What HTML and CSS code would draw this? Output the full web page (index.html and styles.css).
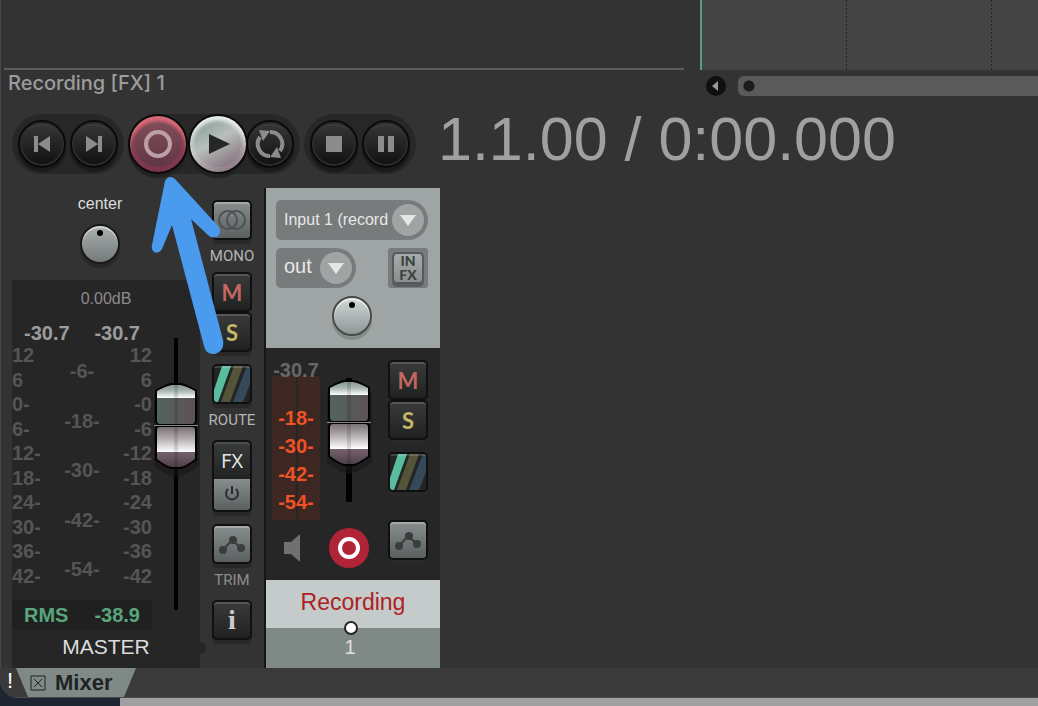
FILE: index.html
```html
<!doctype html>
<html lang="en">
  <head>
    <meta charset="UTF-8" />
    <meta name="viewport" content="width=device-width, initial-scale=1.0" />
    <title>Mixer</title>
    <link rel="stylesheet" href="styles.css">
  </head>
  <body>
    <svg class="defs" aria-hidden="true">
      <defs>
        <linearGradient id="cap-top" x1="0" y1="0" x2="0" y2="1">
          <stop offset="0" stop-color="#82938e" />
          <stop offset="0.5" stop-color="#a9b7b3" />
          <stop offset="1" stop-color="#ffffff" />
        </linearGradient>
        <linearGradient id="cap-upper" x1="0" y1="0" x2="1" y2="0">
          <stop offset="0" stop-color="#52645e" />
          <stop offset="1" stop-color="#5d5258" />
        </linearGradient>
        <linearGradient id="cap-lower" x1="0" y1="0" x2="0" y2="1">
          <stop offset="0" stop-color="#736c70" />
          <stop offset="0.5" stop-color="#b5aeb2" />
          <stop offset="1" stop-color="#ffffff" />
        </linearGradient>
        <linearGradient id="cap-bottom" x1="0" y1="0" x2="0" y2="1">
          <stop offset="0" stop-color="#75616d" />
          <stop offset="1" stop-color="#4b3d45" />
        </linearGradient>
        <clipPath id="cap-clip">
          <path d="M5 9Q14 4 20 3H28Q34 4 43 9V38Q43 42 40 42H8Q5 42 5 38ZM5 48Q5 45 8 45H40Q43 45 43 48V77Q34 84 28 85H20Q14 84 5 77Z" />
        </clipPath>
      </defs>
      <symbol id="cap" viewBox="0 0 48 96">
        <path d="M2 14V84Q14 93 24 95Q34 93 47 84V14Z" fill="#181818" opacity="0.6" />
        <path d="M3 8Q14 2 19 1H29Q34 2 45 8V40L42 43L45 46V78Q35 85 29 87H19Q13 85 3 78V46L6 43L3 40Z" />
        <g clip-path="url(#cap-clip)">
          <rect x="5" y="2" width="38" height="14" fill="url(#cap-top)" />
          <rect x="5" y="16" width="38" height="27" fill="url(#cap-upper)" />
          <rect x="5" y="44" width="38" height="26" fill="url(#cap-lower)" />
          <rect x="5" y="70" width="38" height="17" fill="url(#cap-bottom)" />
          <rect x="22" y="3" width="4" height="84" opacity="0.12" />
        </g>
        <path d="M2 43.5H46" stroke="#8a8a8a" />
      </symbol>
      <symbol id="route" viewBox="0 0 36 36">
        <rect width="36" height="36" fill="#232525" />
        <path d="M8 0H17L4 36H0V24Z" fill="#58bd9e" />
        <path d="M20 0H29L16 36H7Z" fill="#54543a" />
        <path d="M33 0H36V18L29 36H19Z" fill="#34495a" />
        <path d="M0 1H36" stroke="#fff" stroke-width="2" opacity="0.15" />
      </symbol>
      <symbol id="envelope" viewBox="0 0 36 36">
        <path d="M9 24L18 14L27 22" fill="none" stroke="#3a3d3d" stroke-width="2" />
        <g fill="#3a3d3d">
          <circle cx="9" cy="24" r="4" />
          <circle cx="19" cy="14" r="4" />
          <circle cx="27" cy="22" r="4" />
        </g>
      </symbol>
      <symbol id="drop" viewBox="0 0 32 32">
        <circle cx="16" cy="16" r="16" fill="#9fa5a5" />
        <path d="M8 11H24L16 22Z" fill="#e4e6e6" />
      </symbol>
    </svg>

    <div class="window">
      <div class="arrange">
        <div class="track-list"></div>
        <div class="timeline">
          <span class="grid-line"></span>
          <span class="grid-line"></span>
        </div>
      </div>

      <div class="info-bar">
        <div class="track-info">Recording [FX] 1</div>
        <div class="scroll">
          <button type="button" class="scroll-left" aria-label="Scroll left">
            <svg width="20" height="20" viewBox="0 0 20 20"><path d="M6 10L12 5V15Z" fill="#999" /></svg>
          </button>
          <div class="scroll-bar"></div>
        </div>
      </div>

      <div class="transport">
        <div class="pill">
          <button type="button" class="round" aria-label="Go to start">
            <svg width="24" height="24" viewBox="0 0 24 24"><path d="M4 4H8V20H4ZM8 12L20 4V20Z" /></svg>
          </button>
          <button type="button" class="round" aria-label="Go to end">
            <svg width="24" height="24" viewBox="0 0 24 24"><path d="M16 4H20V20H16ZM16 12L4 4V20Z" /></svg>
          </button>
        </div>
        <div class="pill pill-main">
          <button type="button" class="round big record" aria-label="Record">
            <svg width="32" height="32" viewBox="0 0 32 32"><circle cx="16" cy="16" r="12" fill="none" stroke="#bba0a5" stroke-width="4" /></svg>
          </button>
          <button type="button" class="round big play" aria-label="Play">
            <svg width="32" height="32" viewBox="0 0 32 32"><path d="M7 6L28 16L7 26Z" fill="#252827" /></svg>
          </button>
          <button type="button" class="round repeat" aria-label="Repeat">
            <svg width="32" height="32" viewBox="0 0 32 32">
              <g fill="none" stroke="#8c8c8c" stroke-width="4">
                <path d="M16 4A12 12 0 0 1 26 23" />
                <path d="M16 28A12 12 0 0 1 6 9" />
              </g>
              <path d="M5 2L16 3L9 13Z" />
              <path d="M27 30L16 29L23 19Z" />
            </svg>
          </button>
        </div>
        <div class="pill">
          <button type="button" class="round" aria-label="Stop">
            <svg width="24" height="24" viewBox="0 0 24 24"><path d="M4 4H20V20H4Z" /></svg>
          </button>
          <button type="button" class="round" aria-label="Pause">
            <svg width="24" height="24" viewBox="0 0 24 24"><path d="M4 4H10V20H4ZM14 4H20V20H14Z" /></svg>
          </button>
        </div>
        <div class="time">1.1.00 / 0:00.000</div>
      </div>

      <div class="mixer">
        <div class="master">
          <div class="pan">
            <label for="master-pan">center</label>
            <input id="master-pan" class="knob" type="range" />
          </div>
          <div class="master-panel">
            <div class="volume">0.00dB</div>
            <div class="meters">
              <div class="meter-area">
                <div class="peaks"><span>-30.7</span><span>-30.7</span></div>
                <div class="scales">
                  <div class="scale">
                    <span>12</span><span>6</span><span>0-</span><span>6-</span><span>12-</span><span>18-</span><span>24-</span><span>30-</span><span>36-</span><span>42-</span>
                  </div>
                  <div class="scale scale-mid">
                    <span>-6-</span><span>-18-</span><span>-30-</span><span>-42-</span><span>-54-</span>
                  </div>
                  <div class="scale scale-right">
                    <span>12</span><span>6</span><span>-0</span><span>-6</span><span>-12</span><span>-18</span><span>-24</span><span>-30</span><span>-36</span><span>-42</span>
                  </div>
                </div>
                <div class="rms"><span>RMS</span><span>-38.9</span></div>
              </div>
              <div class="fader">
                <svg width="48" height="272" viewBox="0 0 48 272">
                  <rect x="22" width="4" height="272" />
                  <use href="#cap" y="44" width="48" height="96" />
                </svg>
                <input type="range" aria-label="Master volume" />
              </div>
            </div>
            <div class="master-name">MASTER</div>
          </div>
        </div>

        <div class="master-buttons">
          <button type="button" class="key gray" aria-label="Mono">
            <svg width="36" height="36" viewBox="0 0 36 36">
              <g fill="none" stroke="#4c5050" stroke-width="2">
                <circle cx="14" cy="18" r="9" />
                <circle cx="22" cy="18" r="9" />
              </g>
            </svg>
          </button>
          <div class="caption">MONO</div>
          <button type="button" class="key mute">M</button>
          <button type="button" class="key solo">S</button>
          <button type="button" class="key route" aria-label="Route"><svg width="36" height="36"><use href="#route" /></svg></button>
          <div class="caption">ROUTE</div>
          <button type="button" class="key fx">FX</button>
          <button type="button" class="key gray power" aria-label="Bypass FX">
            <svg width="20" height="20" viewBox="0 0 20 20">
              <path d="M10 1V9M6 4A6 6 0 1 0 14 4" fill="none" stroke="#2b2e2e" stroke-width="2" />
            </svg>
          </button>
          <button type="button" class="key gray env" aria-label="Envelopes"><svg width="36" height="36"><use href="#envelope" /></svg></button>
          <div class="caption dim">TRIM</div>
          <button type="button" class="key info">i</button>
        </div>

        <div class="track">
          <div class="track-input">
            <div class="select wide">
              <select aria-label="Record input"><option>Input 1 (record)</option></select>
              <svg width="32" height="32"><use href="#drop" /></svg>
            </div>
            <div class="input-row">
              <div class="select">
                <select class="large" aria-label="Output"><option>out</option></select>
                <svg width="32" height="32"><use href="#drop" /></svg>
              </div>
              <div class="in-fx"><button type="button"><span>IN</span><span>FX</span></button></div>
            </div>
            <input class="knob light" type="range" aria-label="Track pan" />
          </div>
          <div class="track-body">
            <div class="track-main">
              <div class="track-meter">
                <span class="peak">-30.7</span>
                <div class="track-scale">
                  <span>-18-</span><span>-30-</span><span>-42-</span><span>-54-</span>
                </div>
              </div>
              <div class="fader">
                <svg width="48" height="142" viewBox="0 0 48 142">
                  <rect x="21" width="6" height="124" />
                  <use href="#cap" y="1" width="48" height="96" />
                </svg>
                <input type="range" aria-label="Track volume" />
              </div>
              <button type="button" class="monitor" aria-label="Monitor">
                <svg width="48" height="40" viewBox="0 0 48 40"><path d="M12 14H19L28 6V34L19 26H12Z" fill="#707070" /></svg>
              </button>
              <button type="button" class="arm" aria-label="Record arm">
                <svg width="40" height="40" viewBox="0 0 40 40">
                  <circle cx="20" cy="20" r="20" fill="#b02436" />
                  <circle cx="20" cy="20" r="9" fill="none" stroke="#fff" stroke-width="4" />
                </svg>
              </button>
            </div>
            <div class="track-buttons">
              <button type="button" class="key mute">M</button>
              <button type="button" class="key solo">S</button>
              <button type="button" class="key route" aria-label="Route"><svg width="36" height="36"><use href="#route" /></svg></button>
              <button type="button" class="key gray env" aria-label="Envelopes"><svg width="36" height="36"><use href="#envelope" /></svg></button>
            </div>
          </div>
          <div class="track-name">Recording</div>
          <div class="track-number">1</div>
        </div>

        <svg class="pointer" width="76" height="182" viewBox="150 175 76 182" aria-hidden="true">
          <path d="M165 181Q169 174 175 179L218 226Q222 232 218 236Q214 239 209 236L191 219L223 340Q225 351 215 354Q206 355 204 346L172 225L162 249Q159 254 154 252Q151 250 152 245Z" fill="#4a9aee" />
        </svg>
      </div>

      <div class="docker">
        <span class="alert">!</span>
        <button type="button" class="tab">
          <svg width="16" height="16" viewBox="0 0 16 16">
            <path d="M1 1H15V15H1ZM4 4L12 12M12 4L4 12" fill="none" stroke="#1f2323" />
          </svg>
          Mixer
        </button>
      </div>
    </div>
  </body>
</html>
```
FILE: styles.css
```css
* {
  box-sizing: border-box;
}
body {
  margin: 0;
  min-height: 100vh;
  padding-bottom: 8px;
  overflow: hidden;
  font-family: "Liberation Sans", Arial, sans-serif;
  color: #9c9c9c;
  background: linear-gradient(to right, #1d2533 120px, #a0a0a0 120px);
}
button {
  padding: 0;
  border: none;
  background: none;
  color: inherit;
  font-family: inherit;
}
svg {
  display: block;
}
.defs {
  position: absolute;
  width: 0;
  height: 0;
}
.window {
  display: flex;
  flex-direction: column;
  min-height: calc(100vh - 8px);
  background: #333333;
  border-bottom-left-radius: 18px;
  box-shadow: inset 1px 0 #484848;
  overflow: hidden;
}

/* arrange view */
.arrange {
  display: flex;
  gap: 16px;
  height: 70px;
  padding-left: 4px;
}
.track-list {
  width: 680px;
  border-bottom: 2px solid #5b5b5b;
}
.timeline {
  display: flex;
  flex: 1;
  border-left: 2px solid #559a86;
  background: #444444;
}
.grid-line {
  width: 1px;
  margin-left: 144px;
  background: repeating-linear-gradient(#262626 0 2px, #444444 2px 4px);
}
.info-bar {
  display: flex;
  height: 44px;
}
.track-info {
  width: 706px;
  padding-left: 8px;
  font-family: Inter, sans-serif;
  font-size: 20px;
  font-weight: 500;
  line-height: 26px;
}
.scroll {
  display: flex;
  flex: 1;
  gap: 12px;
  height: 20px;
  margin-top: 6px;
}
.scroll-left {
  width: 20px;
  height: 20px;
  border-radius: 50%;
  background: #101010;
}
.scroll-bar {
  flex: 1;
  border-radius: 6px 0 0 6px;
  background: radial-gradient(circle at 11px 10px, #1c1c1c 5px, #5a5a5a 6px);
}

/* transport */
.transport {
  display: flex;
  align-items: center;
  gap: 4px;
  height: 60px;
  margin-bottom: 14px;
  padding-left: 12px;
}
.pill {
  display: flex;
  align-items: center;
  gap: 4px;
  height: 60px;
  padding: 0 6px;
  border-radius: 30px;
  background: #272727;
}
.pill-main {
  gap: 0;
  padding-left: 0;
}
.round {
  display: flex;
  align-items: center;
  justify-content: center;
  width: 48px;
  height: 48px;
  border: 2px solid #0a0a0a;
  border-radius: 50%;
  background: linear-gradient(#383838, #101010);
  box-shadow: inset 0 0 0 2px #2d2d2d, inset 0 3px 1px #444444, 0 4px 1px #1a1a1a;
  fill: #8c8c8c;
}
.big {
  z-index: 1;
  width: 60px;
  height: 60px;
}
.record {
  background: linear-gradient(#84505a, #5d3344);
  box-shadow: inset 0 0 0 5px rgba(190, 60, 90, 0.3), inset 0 5px 3px #e27c80, 0 4px 1px #222222;
}
.play {
  background: linear-gradient(150deg, #93a79f 20%, #b9bfbd 45%, #84707b 85%);
  box-shadow: inset 0 0 0 5px rgba(255, 255, 255, 0.1), inset 0 4px 4px #f0f2f2, 0 4px 1px #222222;
}
.repeat {
  margin-left: -2px;
}
.time {
  height: 60px;
  margin-left: 18px;
  font-size: 61px;
  line-height: 50px;
  white-space: nowrap;
  color: #a0a0a0;
}

/* mixer */
.mixer {
  position: relative;
  display: flex;
  flex: 1;
  padding-left: 12px;
}
.master {
  display: flex;
  flex-direction: column;
  width: 188px;
}
.pan {
  display: flex;
  flex-direction: column;
  align-items: center;
  gap: 10px;
  height: 92px;
  padding: 6px 12px 0 0;
  font-size: 16px;
  line-height: 20px;
  color: #dddddd;
}
.knob {
  appearance: none;
  width: 40px;
  height: 40px;
  margin: 0;
  border: 2px solid #191919;
  border-radius: 50%;
  background: linear-gradient(#a9b1b0, #747a79);
  box-shadow: inset 0 2px 1px #d5dada, 0 4px #282828;
}
.knob::-webkit-slider-runnable-track {
  height: 36px;
}
.knob::-webkit-slider-thumb {
  appearance: none;
  width: 6px;
  height: 6px;
  margin-top: 4px;
  border-radius: 50%;
  background: #000000;
}
.light {
  border-color: #484b4b;
  background: linear-gradient(#d0d7d6, #8f9897);
  box-shadow: inset 0 2px 1px #f0f4f4, 0 4px #858b8a;
}
.master-panel {
  position: relative;
  flex: 1;
  padding-top: 9px;
  background: #262626;
}
.master-panel::after {
  content: "";
  position: absolute;
  right: -6px;
  bottom: 14px;
  width: 12px;
  height: 12px;
  border-radius: 50%;
  background: #262626;
}
.volume {
  margin-bottom: 14px;
  font-size: 16px;
  line-height: 20px;
  text-align: center;
  color: #8c8c8c;
}
.meters {
  display: flex;
}
.meter-area {
  width: 140px;
  font-size: 20px;
  font-weight: bold;
  line-height: 20px;
}
.peaks,
.rms {
  display: flex;
  justify-content: space-between;
  padding: 0 12px;
}
.scales {
  display: flex;
  justify-content: space-between;
  height: 241px;
  margin: 2px 0 14px;
  color: #555555;
}
.scale {
  display: flex;
  flex-direction: column;
  justify-content: space-between;
}
.scale-mid {
  padding: 16px 0 7px;
  text-align: center;
}
.scale-right {
  text-align: right;
}
.rms {
  color: #58a67c;
  line-height: 30px;
  background: #202020;
}
.fader {
  display: grid;
}
.fader > * {
  grid-area: 1 / 1;
}
.fader input {
  width: 48px;
  height: 100%;
  margin: 0;
  opacity: 0;
  writing-mode: vertical-lr;
  direction: rtl;
}
.meters .fader {
  padding-top: 15px;
}
.master-name {
  margin-top: 5px;
  font-size: 21px;
  line-height: 24px;
  text-align: center;
  color: #dddddd;
}

/* strip buttons */
.master-buttons,
.track-buttons {
  display: flex;
  flex-direction: column;
  align-items: center;
  width: 40px;
}
.master-buttons {
  width: 64px;
  padding-top: 12px;
}
.key {
  display: flex;
  align-items: center;
  justify-content: center;
  flex-shrink: 0;
  width: 40px;
  height: 40px;
  border: 2px solid #101010;
  border-radius: 5px;
  background: linear-gradient(#3a3c3c, #202222);
  box-shadow: inset 0 2px #565858, 0 4px #282828;
  font-family: Lato, sans-serif;
  font-size: 22px;
  font-weight: bold;
}
.gray {
  background: linear-gradient(#888e8e, #5a5f5f);
  box-shadow: inset 0 2px #a5abab, 0 4px #282828;
}
.mute {
  color: #c4685f;
  box-shadow: inset 0 2px #565858;
}
.solo {
  color: #c4b868;
}
.route {
  margin-top: 12px;
  overflow: hidden;
}
.caption {
  line-height: 32px;
  font-family: Roboto, sans-serif;
  font-size: 15px;
  color: #b5b5b5;
}
.dim {
  color: #8c8c8c;
}
.fx {
  height: 39px;
  margin-top: 4px;
  border-bottom: none;
  border-radius: 5px 5px 0 0;
  box-shadow: inset 0 2px #4c4f4f;
  font-family: "Open Sans", sans-serif;
  font-size: 20px;
  font-weight: normal;
  color: #e8e8e8;
}
.power {
  height: 33px;
  border-top: none;
  border-radius: 0 0 5px 5px;
  box-shadow: 0 4px #282828;
}
.env {
  margin-top: 12px;
}
.info {
  margin-top: 4px;
  font-family: "Liberation Serif", serif;
  font-size: 28px;
  color: #cccccc;
}

/* track strip */
.track {
  width: 176px;
  border-left: 2px solid #161616;
}
.track-input {
  display: flex;
  flex-direction: column;
  gap: 8px;
  height: 160px;
  padding: 12px 12px 0 10px;
  background: #9ea5a4;
}
.input-row {
  display: flex;
  justify-content: space-between;
}
.select {
  display: grid;
  align-items: center;
  width: 80px;
  height: 40px;
  border-radius: 5px 20px 20px 5px;
  background: #777b7b;
}
.wide {
  width: 152px;
}
.select > * {
  grid-area: 1 / 1;
}
.select svg {
  justify-self: end;
  margin-right: 4px;
  pointer-events: none;
}
.select select {
  appearance: none;
  width: 100%;
  height: 40px;
  padding: 0 40px 2px 8px;
  border: none;
  background: none;
  font-family: inherit;
  font-size: 16px;
  color: #e8e8e8;
}
.select .large {
  font-size: 20px;
  padding-bottom: 4px;
}
.in-fx {
  width: 40px;
  height: 40px;
  padding: 4px;
  border-radius: 3px;
  background: #777b7b;
}
.in-fx button {
  display: flex;
  flex-direction: column;
  align-items: center;
  justify-content: center;
  width: 32px;
  height: 32px;
  border: 2px solid #555959;
  border-radius: 5px;
  background: linear-gradient(#a5acab, #888f8e);
  box-shadow: 0 3px #5a5e5e;
  font-family: Lato, sans-serif;
  font-size: 14px;
  font-weight: 900;
  line-height: 14px;
  color: #3d4141;
}
.track-input .knob {
  align-self: center;
}
.track-body {
  display: flex;
  justify-content: space-between;
  height: 232px;
  padding: 12px 12px 0 6px;
  background: #262626;
}
.track-main {
  display: grid;
  grid-template-columns: 48px 50px;
  grid-template-rows: 160px 40px;
  column-gap: 4px;
  row-gap: 8px;
  justify-items: center;
}
.track-meter {
  width: 48px;
  font-size: 20px;
  font-weight: bold;
  line-height: 20px;
  text-align: center;
  background: linear-gradient(to right, transparent 50%, #262626 50%, #262626 26px, transparent 26px),
    linear-gradient(#262626 16px, #3d2722 16px);
}
.peak {
  color: #686868;
}
.track-scale {
  display: flex;
  flex-direction: column;
  gap: 8px;
  margin-top: 28px;
  color: #ee5225;
}
.track-main .fader {
  align-self: start;
  padding-top: 18px;
}
.track-buttons .env {
  margin-top: 28px;
}
.track-name {
  height: 48px;
  font-size: 23px;
  line-height: 44px;
  text-align: center;
  color: #ad211f;
  background: #c5caca;
}
.track-number {
  position: relative;
  height: 40px;
  padding-right: 6px;
  font-size: 20px;
  line-height: 38px;
  text-align: center;
  color: #e0e0e0;
  background: #7f8986;
}
.track-number::before {
  content: "";
  position: absolute;
  top: -7px;
  left: 78px;
  box-sizing: border-box;
  width: 14px;
  height: 14px;
  border: 2px solid #262626;
  border-radius: 50%;
  background: #ffffff;
}
.pointer {
  position: absolute;
  top: -13px;
  left: 150px;
  z-index: 2;
}

/* docker tabs */
.docker {
  display: flex;
  height: 30px;
  background: #3a3a3a;
  border-bottom: 1px solid #4a4a4a;
}
.alert {
  width: 16px;
  padding-left: 7px;
  font-size: 22px;
  line-height: 26px;
  color: #ffffff;
}
.tab {
  display: flex;
  align-items: center;
  gap: 9px;
  width: 120px;
  padding-left: 14px;
  font-size: 22px;
  font-weight: bold;
  color: #1f2323;
  background: #7f8986;
  clip-path: polygon(0 0, 100% 0, 90% 100%, 10% 100%);
}
```
